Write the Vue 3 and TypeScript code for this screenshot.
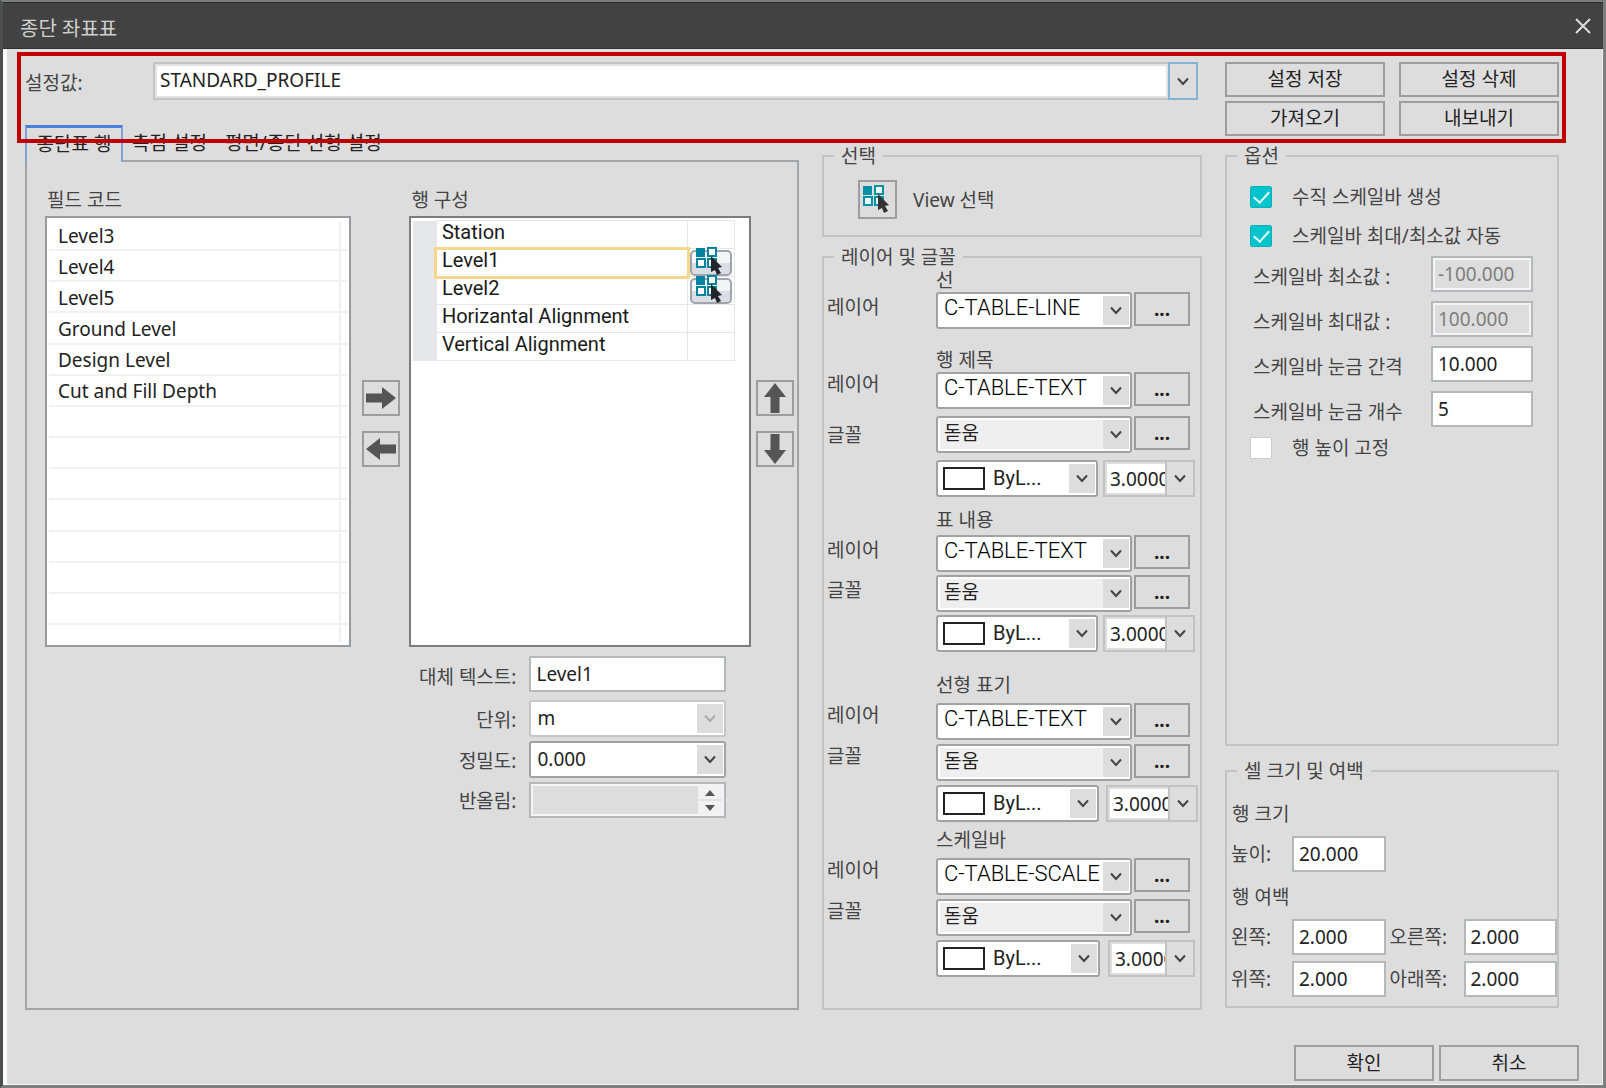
<script setup lang="ts">
import { ref } from 'vue'

interface RowItem {
  name: string
  pick: boolean
}

interface StyleSection {
  id: string
  title: string
  layer: string
  font?: string
  color?: string
  size?: string
}

const preset = ref('STANDARD_PROFILE')
const tabs = ['종단표 행', '측점 설정', '평면/종단 선형 설정']
const activeTab = ref(0)

const fields = ['Level3', 'Level4', 'Level5', 'Ground Level', 'Design Level', 'Cut and Fill Depth']
const blankRows = 7

const rows: RowItem[] = [
  { name: 'Station', pick: false },
  { name: 'Level1', pick: true },
  { name: 'Level2', pick: true },
  { name: 'Horizantal Alignment', pick: false },
  { name: 'Vertical Alignment', pick: false },
]
const selectedRow = ref(1)

const sections: StyleSection[] = [
  { id: 'line', title: '선', layer: 'C-TABLE-LINE' },
  { id: 'heading', title: '행 제목', layer: 'C-TABLE-TEXT', font: '돋움', color: 'ByL...', size: '3.0000' },
  { id: 'content', title: '표 내용', layer: 'C-TABLE-TEXT', font: '돋움', color: 'ByL...', size: '3.0000' },
  { id: 'alignment', title: '선형 표기', layer: 'C-TABLE-TEXT', font: '돋움', color: 'ByL...', size: '3.0000' },
  { id: 'scalebar', title: '스케일바', layer: 'C-TABLE-SCALE', font: '돋움', color: 'ByL...', size: '3.0000' },
]

const altText = ref('Level1')
const showScaleBar = ref(true)
const autoRange = ref(true)
const fixedHeight = ref(false)

const scaleInputs = [
  { id: 'min', label: '스케일바 최소값 :', value: '-100.000', disabled: true },
  { id: 'max', label: '스케일바 최대값 :', value: '100.000', disabled: true },
  { id: 'step', label: '스케일바 눈금 간격', value: '10.000', disabled: false },
  { id: 'count', label: '스케일바 눈금 개수', value: '5', disabled: false },
]

const margins = [
  { id: 'left', label: '왼쪽:' },
  { id: 'right', label: '오른쪽:' },
  { id: 'top', label: '위쪽:' },
  { id: 'bottom', label: '아래쪽:' },
]
</script>

<template>
  <div class="window">
    <header class="titlebar">
      <h1>종단 좌표표</h1>
      <button class="close" aria-label="닫기">
        <svg width="16" height="16" viewBox="0 0 16 16"><path d="M1 1L15 15M15 1L1 15" stroke="#dcdcdc" stroke-width="2" fill="none" /></svg>
      </button>
    </header>

    <div class="highlight"></div>

    <section class="preset">
      <div class="preset-field">
        <label for="preset">설정값:</label>
        <div class="preset-combo">
          <input id="preset" v-model="preset" type="text" />
          <button aria-label="설정값 목록">
            <svg width="14" height="9" viewBox="0 0 14 9"><path d="M2 1.500L7 7L12 1.500" class="chev" /></svg>
          </button>
        </div>
      </div>
      <div class="preset-buttons">
        <button class="btn">설정 저장</button>
        <button class="btn">설정 삭제</button>
        <button class="btn">가져오기</button>
        <button class="btn">내보내기</button>
      </div>
    </section>

    <main class="body">
      <section class="left">
        <nav class="tabs" role="tablist">
          <button
            v-for="(tab, i) in tabs"
            :key="tab"
            role="tab"
            :aria-selected="i === activeTab"
            :class="['tab', { active: i === activeTab }]"
            @click="activeTab = i"
          >{{ tab }}</button>
        </nav>
        <div class="panel">
          <div class="field-col">
            <h2>필드 코드</h2>
            <ul class="fields">
              <li v-for="f in fields" :key="f">{{ f }}</li>
              <li v-for="n in blankRows" :key="n"></li>
            </ul>
          </div>

          <div class="movers">
            <button class="mover" aria-label="추가">
              <svg width="30" height="22" viewBox="0 0 30 22"><path d="M0 6.500H16V0L30 11L16 22V15.500H0Z" fill="#555" /></svg>
            </button>
            <button class="mover" aria-label="제거">
              <svg width="30" height="22" viewBox="0 0 30 22"><path d="M30 6.500H14V0L0 11L14 22V15.500H30Z" fill="#555" /></svg>
            </button>
          </div>

          <div class="row-col">
            <h2>행 구성</h2>
            <div class="rows">
              <table>
                <tbody>
                  <tr v-for="(r, i) in rows" :key="r.name" :class="{ selected: i === selectedRow }" @click="selectedRow = i">
                    <th></th>
                    <td class="name">{{ r.name }}</td>
                    <td class="pick">
                      <button v-if="r.pick" class="pick-btn" aria-label="선택">
                        <svg width="28" height="28" viewBox="0 0 28 28">
                          <rect x="1" y="1" width="9" height="9" fill="#0383a0" />
                          <g fill="#fff" stroke="#0383a0" stroke-width="2">
                            <rect x="13" y="1" width="8" height="8" />
                            <rect x="2" y="12" width="8" height="8" />
                            <rect x="13" y="12" width="8" height="8" />
                          </g>
                          <path d="M16 9L27 20L23 21L26 26L22 28L20 23L16 25Z" fill="#22262b" />
                        </svg>
                      </button>
                    </td>
                  </tr>
                </tbody>
              </table>
            </div>

            <div class="detail">
              <label for="alt">대체 텍스트:</label>
              <input id="alt" v-model="altText" class="text" type="text" />
              <label for="unit">단위:</label>
              <span class="combo off">
                <select id="unit" disabled><option>m</option></select>
                <i><svg width="14" height="9" viewBox="0 0 14 9"><path d="M2 1.500L7 7L12 1.500" class="chev" /></svg></i>
              </span>
              <label for="precision">정밀도:</label>
              <span class="combo">
                <select id="precision"><option>0.000</option></select>
                <i><svg width="14" height="9" viewBox="0 0 14 9"><path d="M2 1.500L7 7L12 1.500" class="chev" /></svg></i>
              </span>
              <label for="round">반올림:</label>
              <span class="spin">
                <input id="round" type="text" disabled />
                <span class="spin-btns">
                  <button disabled aria-label="증가"><svg width="10" height="6" viewBox="0 0 10 6"><path d="M0 6L5 0L10 6Z" fill="#555" /></svg></button>
                  <button disabled aria-label="감소"><svg width="10" height="6" viewBox="0 0 10 6"><path d="M0 0L5 6L10 0Z" fill="#555" /></svg></button>
                </span>
              </span>
            </div>
          </div>

          <div class="movers">
            <button class="mover" aria-label="위로">
              <svg width="22" height="30" viewBox="0 0 22 30"><path d="M6.500 30V14H0L11 0L22 14H15.500V30Z" fill="#555" /></svg>
            </button>
            <button class="mover" aria-label="아래로">
              <svg width="22" height="30" viewBox="0 0 22 30"><path d="M6.500 0V16H0L11 30L22 16H15.500V0Z" fill="#555" /></svg>
            </button>
          </div>
        </div>
      </section>

      <section class="middle">
        <fieldset class="group view-group">
          <legend>선택</legend>
          <div class="view-row">
            <button id="view" class="view-btn" aria-label="View 선택">
              <svg width="28" height="28" viewBox="0 0 28 28">
                <rect x="1" y="1" width="9" height="9" fill="#0391a5" />
                <g fill="#eefafa" stroke="#0391a5" stroke-width="2">
                  <rect x="13" y="1" width="8" height="8" />
                  <rect x="2" y="12" width="8" height="8" />
                  <rect x="13" y="12" width="8" height="8" />
                </g>
                <path d="M16 9L27 20L23 21L26 26L22 28L20 23L16 25Z" fill="#333" />
              </svg>
            </button>
            <label for="view">View 선택</label>
          </div>
        </fieldset>

        <fieldset class="group">
          <legend>레이어 및 글꼴</legend>
          <div v-for="s in sections" :key="s.id" :class="['style', s.id]">
            <h3>{{ s.title }}</h3>
            <div class="style-row">
              <label :for="s.id + '-layer'">레이어</label>
              <span class="combo layer">
                <select :id="s.id + '-layer'"><option>{{ s.layer }}</option></select>
                <i><svg width="14" height="9" viewBox="0 0 14 9"><path d="M2 1.500L7 7L12 1.500" class="chev" /></svg></i>
              </span>
              <button class="btn more">...</button>
            </div>
            <div v-if="s.font" class="style-row font-row">
              <label :for="s.id + '-font'">글꼴</label>
              <span class="combo font">
                <select :id="s.id + '-font'"><option>{{ s.font }}</option></select>
                <i><svg width="14" height="9" viewBox="0 0 14 9"><path d="M2 1.500L7 7L12 1.500" class="chev" /></svg></i>
              </span>
              <button class="btn more">...</button>
            </div>
            <div v-if="s.color" class="style-row color-row">
              <span class="combo color">
                <b class="swatch"></b>
                <select :aria-label="s.title + ' 색상'"><option>{{ s.color }}</option></select>
                <i><svg width="14" height="9" viewBox="0 0 14 9"><path d="M2 1.500L7 7L12 1.500" class="chev" /></svg></i>
              </span>
              <span class="size">
                <input type="text" :value="s.size" :aria-label="s.title + ' 크기'" />
                <button aria-label="크기 목록"><svg width="14" height="9" viewBox="0 0 14 9"><path d="M2 1.500L7 7L12 1.500" class="chev" /></svg></button>
              </span>
            </div>
          </div>
        </fieldset>
      </section>

      <section class="right">
        <fieldset class="group options">
          <legend>옵션</legend>
          <label class="check"><input v-model="showScaleBar" type="checkbox" />수직 스케일바 생성</label>
          <label class="check"><input v-model="autoRange" type="checkbox" />스케일바 최대/최소값 자동</label>
          <div class="scale-inputs">
            <div v-for="s in scaleInputs" :key="s.id" class="scale-row">
              <label :for="'scale-' + s.id">{{ s.label }}</label>
              <input :id="'scale-' + s.id" class="text" type="text" :value="s.value" :disabled="s.disabled" />
            </div>
          </div>
          <label class="check"><input v-model="fixedHeight" type="checkbox" />행 높이 고정</label>
        </fieldset>

        <fieldset class="group cell">
          <legend>셀 크기 및 여백</legend>
          <h3>행 크기</h3>
          <div class="cell-grid">
            <label for="height">높이:</label>
            <input id="height" class="text" type="text" value="20.000" />
          </div>
          <h3>행 여백</h3>
          <div class="cell-grid">
            <template v-for="m in margins" :key="m.id">
              <label :for="'margin-' + m.id">{{ m.label }}</label>
              <input :id="'margin-' + m.id" class="text" type="text" value="2.000" />
            </template>
          </div>
        </fieldset>
      </section>
    </main>

    <footer class="footer">
      <button class="btn">확인</button>
      <button class="btn">취소</button>
    </footer>
  </div>
</template>

<style>
body {
  margin: 0;
  background: #ddd;
}
</style>

<style scoped>
* {
  box-sizing: border-box;
}

.window {
  position: relative;
  display: flex;
  flex-direction: column;
  min-height: 100vh;
  background: #ddd;
  border: 3px solid #7d7f7e;
  border-width: 2px 3px 3px;
  border-left-color: #4c4f4e;
  box-shadow: inset 4px 0 0 #fbfbfb, inset -1px -1px 0 #f4f4f4;
  color: #444;
  font: 19px/24px "Noto Sans", "Noto Sans CJK KR", sans-serif;
}

h1, h2, h3, ul {
  margin: 0;
  padding: 0;
  font-size: 19px;
  font-weight: 400;
}

button, input, select {
  margin: 0;
  padding: 0;
  min-width: 0;
  border: 0;
  border-radius: 0;
  background: none;
  color: #222;
  font: inherit;
  outline: 0;
}

button {
  display: flex;
  align-items: center;
  justify-content: center;
}

svg {
  display: block;
  flex: none;
}

.chev {
  fill: none;
  stroke: #444;
  stroke-width: 2;
}

/* title bar */
.titlebar {
  display: flex;
  align-items: center;
  justify-content: space-between;
  height: 47px;
  padding: 6px 12px 0 17px;
  background: #424242;
  border-top: 1px solid #2c2c2c;
  border-bottom: 1px solid #2f2f2f;
}

.titlebar h1 {
  color: #cfcfcf;
  font-size: 20px;
}

.close {
  height: 24px;
  margin-bottom: 6px;
}

.highlight {
  position: absolute;
  z-index: 3;
  top: 50px;
  left: 14px;
  right: 37px;
  height: 91px;
  border: 4px solid #c00000;
  pointer-events: none;
}

/* preset row */
.preset {
  display: grid;
  grid-template-columns: 1173fr 334fr;
  gap: 27px;
  padding: 13px 44px 8px 22px;
}

.preset-field {
  display: flex;
  align-items: flex-start;
}

.preset-field label {
  width: 128px;
  padding: 9px 0 0;
}

.preset-combo {
  display: flex;
  flex: 1;
  height: 38px;
}

.preset-combo input {
  flex: 1;
  padding: 0 2px 2px 5px;
  background: #fff;
  border: 2px solid #c4c4c4;
  border-right: 0;
  box-shadow: inset 0 0 0 2px #e2e2e2;
}

.preset-combo button {
  width: 30px;
  border: 2px solid #82b4d4;
}

.preset-buttons {
  display: grid;
  grid-template-columns: 1fr 1fr;
  grid-auto-rows: 35px;
  gap: 4px 14px;
}

.btn {
  border: 2px solid #9d9d9d;
  padding-bottom: 1px;
}

/* main columns */
.body {
  display: grid;
  flex: 1;
  grid-template-columns: 774fr 380fr 334fr;
  gap: 23px;
  padding: 0 44px 0 22px;
}

.left {
  display: flex;
  flex-direction: column;
  margin-top: -19px;
}

.tabs {
  display: flex;
  height: 37px;
  margin-bottom: -2px;
}

.tab {
  height: 35px;
  padding: 0 9px;
}

.tab.active {
  position: relative;
  height: 37px;
  width: 98px;
  padding: 0 0 2px;
  background: #ddd;
  border: 2px solid #7ea0dc;
  border-top: 3px solid #4a80d8;
  border-bottom: 0;
}

.panel {
  display: flex;
  flex: 1;
  align-items: flex-start;
  padding: 26px 0 0 18px;
  border: 2px solid #a3a4a9;
}

.field-col {
  flex: 305;
  min-width: 0;
}

.row-col {
  flex: 340;
  min-width: 0;
}

h2 {
  height: 28px;
  padding-left: 2px;
}

.fields {
  display: grid;
  grid-template-rows: repeat(13, 1fr);
  height: 431px;
  padding: 2px 2px 20px;
  list-style: none;
  background: linear-gradient(#f1f1f1, #f1f1f1) right 8px top 4px / 2px 420px no-repeat #fff;
  border: 2px solid #9a9ba0;
}

.fields li {
  display: flex;
  align-items: center;
  padding: 2px 0 0 9px;
  border-bottom: 2px solid #f1f1f1;
  color: #222;
}

.movers {
  display: flex;
  flex-direction: column;
  align-items: center;
  gap: 15px;
  width: 58px;
  padding: 192px 0 0 1px;
}

.movers:last-child {
  width: 46px;
}

.mover {
  width: 38px;
  height: 36px;
  border: 2px solid #9d9d9d;
}

.rows {
  height: 431px;
  padding: 2px;
  background: #fff;
  border: 2px solid #7d7d7d;
}

.rows table {
  width: calc(100% - 12px);
  table-layout: fixed;
  border-collapse: collapse;
}

.rows tr {
  height: 28px;
}

.rows th {
  width: 23px;
  padding: 0;
  background: #e6e7ea;
}

.rows td {
  height: 28px;
  padding: 0;
  border: 1px solid #e6e6e6;
}

.rows td.name {
  padding: 0 0 5px 5px;
  color: #1a1a1a;
  font: 20px/22px Roboto, sans-serif;
}

.rows .selected td.name {
  outline: 3px solid #f5d88c;
  outline-offset: -1px;
}

.rows td.pick {
  width: 47px;
}

.pick-btn {
  width: 42px;
  height: 26px;
  margin-left: 2px;
  padding: 0 5px 3px 0;
  background: linear-gradient(#f4f5f7 50%, #dadde3 50%);
  border: 2px solid #a0a5ad;
  border-radius: 5px;
}

/* row detail form */
.detail {
  display: grid;
  grid-template-columns: 107px 197px;
  gap: 4px 13px;
  align-items: center;
  margin-top: 9px;
}

.detail label {
  padding-top: 2px;
  text-align: right;
}

.text {
  width: 100%;
  height: 36px;
  padding: 0 4px 1px 5px;
  background: #fff;
  border: 2px solid #b6b7bb;
}

.detail .text {
  margin-bottom: 4px;
}

.text:disabled {
  background: #ddd;
  color: #7d7d7d;
  box-shadow: inset 0 0 0 2px #f4f4f4;
}

.combo {
  position: relative;
  display: flex;
  height: 37px;
  background: #fff;
  border: 2px solid #a2a2a2;
  border-radius: 3px;
}

.combo select {
  flex: 1;
  padding: 0 0 1px 6px;
  appearance: none;
}

.combo i {
  position: absolute;
  top: 2px;
  right: 1px;
  bottom: 2px;
  display: flex;
  align-items: center;
  justify-content: center;
  width: 26px;
  background: #ddd;
  pointer-events: none;
}

.combo.off {
  border-color: #c6c6c6;
}

.combo.off select {
  opacity: 1;
}

.combo.off .chev {
  stroke: #aaa;
}

.spin {
  display: flex;
  height: 36px;
  padding: 2px;
  background: #ddd;
  border: 2px solid #b6b7bb;
  box-shadow: inset 0 0 0 2px #f4f4f4;
}

.spin input {
  flex: 1;
}

.spin-btns {
  display: flex;
  flex-direction: column;
  gap: 2px;
  width: 24px;
  background: #e2e2e2;
}

.spin-btns button {
  flex: 1;
  background: #f2f2f2;
}

/* groups */
.group {
  min-width: 0;
  margin: 0;
  padding: 0;
  border: 2px solid #c3c3c3;
}

legend {
  margin-left: 10px;
  padding: 0 7px;
}

.middle {
  display: flex;
  flex-direction: column;
  gap: 8px;
}

.middle .group:last-child {
  flex: 1;
  padding-bottom: 28px;
}

.view-row {
  display: flex;
  align-items: center;
  gap: 16px;
  padding: 12px 0 16px 34px;
}

.view-btn {
  width: 39px;
  height: 39px;
  padding: 0 3px 2px 0;
  border: 2px solid #9d9d9d;
}

h3 {
  height: 22px;
  line-height: 22px;
}

.style h3 {
  margin: 0 0 7px 112px;
}

.style.line h3,
.style.heading h3 {
  margin-bottom: 1px;
}

.style.content h3 {
  margin-bottom: 4px;
}

.style.heading {
  margin-top: 20px;
}

.style.content {
  margin-top: 12px;
}

.style.alignment {
  margin-top: 22px;
}

.style.scalebar {
  margin-top: 7px;
}

.style-row {
  display: flex;
  align-items: flex-start;
  gap: 2px;
  padding: 0 10px 0 3px;
}

.style-row + .style-row {
  margin-top: 4px;
}

.heading .style-row + .style-row {
  margin-top: 7px;
}

.content .style-row + .style-row {
  margin-top: 3px;
}

.style-row label {
  width: 107px;
}

.line label,
.content label {
  padding-top: 3px;
}

.heading .font-row label {
  align-self: center;
}

.style-row .combo {
  flex: 1;
  min-width: 0;
}

.style-row .layer select {
  padding-bottom: 5px;
  color: #000;
  font: 22px/24px Roboto, sans-serif;
  font-weight: 300;
}

.combo.font {
  background: linear-gradient(#efefef, #efefef) 2px 2px / calc(100% - 4px) 29px no-repeat #fff;
}

.combo.font select {
  padding-bottom: 3px;
}

.more {
  width: 56px;
  height: 34px;
  padding: 0;
  font-weight: 700;
}

.color-row {
  gap: 5px;
  padding: 0 5px 0 112px;
}

.alignment .color-row {
  gap: 7px;
  padding-right: 2px;
}

.scalebar .color-row {
  gap: 8px;
}

.swatch {
  align-self: center;
  flex: none;
  width: 42px;
  height: 23px;
  margin-left: 5px;
  border: 2px solid #222;
}

.color select {
  padding-left: 8px;
  font: 20px/24px Roboto, sans-serif;
}

.size {
  display: flex;
  width: 92px;
  height: 37px;
  border: 2px solid #c2c2c2;
}

.scalebar .size {
  width: 87px;
}

.size input {
  flex: 1;
  margin: 2px 0 2px 2px;
  padding-left: 3px;
  background: #fff;
}

.size button {
  width: 28px;
  border-left: 2px solid #c2c2c2;
}

/* options */
.right {
  display: flex;
  flex-direction: column;
  gap: 13px;
  padding-bottom: 2px;
}

.options {
  flex: 1;
}

.options legend {
  margin-bottom: 9px;
}

.check {
  display: flex;
  align-items: center;
  gap: 20px;
  height: 39px;
  padding-left: 23px;
}

.check input {
  display: flex;
  justify-content: center;
  width: 22px;
  height: 22px;
  appearance: none;
  background: #fff;
  border: 1px solid #ccc;
  border-radius: 2px;
}

.check input:checked {
  background: #00c4cc;
  border-color: #0bb0b8;
}

.check input:checked::after {
  width: 7px;
  height: 13px;
  margin-top: 1px;
  border: solid #e8ffff;
  border-width: 0 2px 2px 0;
  content: "";
  transform: rotate(42deg);
}

.scale-inputs {
  display: grid;
  gap: 9px;
  padding: 1px 24px 1px 26px;
}

.scale-row {
  display: flex;
  align-items: center;
}

.scale-row label {
  flex: 1;
  padding-top: 6px;
}

.scale-row .text {
  width: 102px;
}

.cell {
  padding-bottom: 9px;
}

.cell h3 {
  padding-left: 5px;
}

.cell legend {
  margin-bottom: 20px;
}

.cell-grid {
  display: grid;
  grid-template-columns: 65px 1fr 78px 1fr;
  gap: 6px 0;
  align-items: center;
}

.cell h3 + .cell-grid {
  margin-top: 11px;
}

.cell-grid + h3 {
  margin-top: 14px;
}

.cell-grid label {
  padding-left: 4px;
}

/* footer */
.footer {
  display: flex;
  justify-content: flex-end;
  gap: 5px;
  padding: 35px 24px 4px;
}

.footer .btn {
  width: 140px;
  height: 36px;
}
</style>
